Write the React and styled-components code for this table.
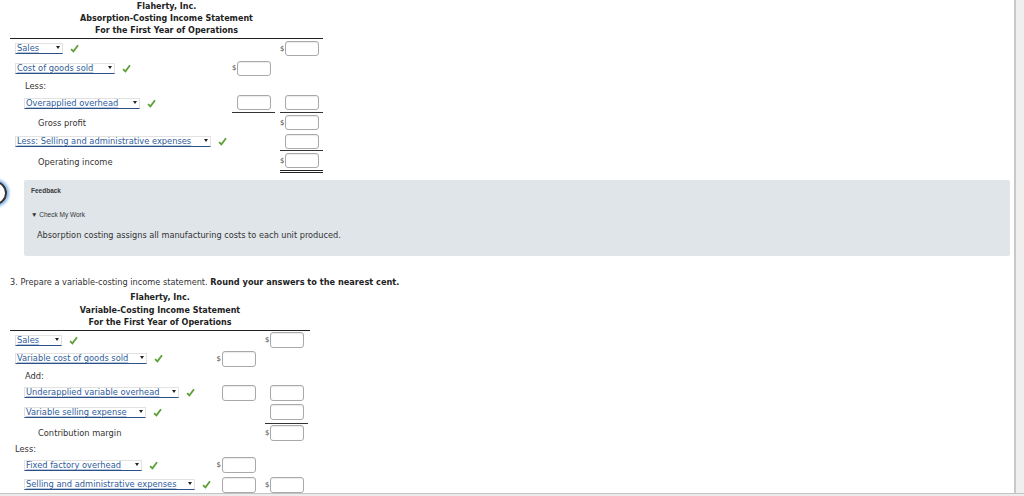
import React from "react";
import styled, { createGlobalStyle } from "styled-components";

const Global = createGlobalStyle`
  html, body { margin: 0; padding: 0; background: #fff; }
  body { font-family: "DejaVu Sans", Verdana, sans-serif; color: #222; }
`;

const Frame = styled.div`
  width: 1024px;
  height: 496px;
  display: grid;
  grid-template-columns: 1014px 10px;
  grid-template-rows: 493px 3px;
  overflow: hidden;
`;

const Main = styled.div`
  position: relative;
  overflow: hidden;
  padding-left: 10px;
  background: #fff;
`;

const Track = styled.div`
  border-left: 2px solid #c9c9c9;
  background: #efefef;
`;

const BottomBar = styled.div`
  grid-column: 1 / 3;
  border-top: 1px solid #c4c4c4;
  background: #ececec;
`;

const Title = styled.div`
  width: ${(p) => p.$w}px;
  text-align: center;
  font-weight: bold;
  font-size: 8px;
  line-height: ${(p) => p.$lh}px;
  padding-top: ${(p) => p.$pt}px;
  color: #222;
`;

const Table = styled.div`
  width: ${(p) => p.$w}px;
  border-top: 1px solid #222;
  margin-top: ${(p) => p.$mt}px;
`;

const Row = styled.div`
  display: grid;
  grid-template-columns: ${(p) => p.$cols};
  column-gap: ${(p) => p.$gap}px;
  height: ${(p) => p.$h}px;
  align-items: stretch;
`;

const LabelCell = styled.div`
  display: flex;
  align-items: center;
  padding-left: ${(p) => p.$indent}px;
  font-size: 8.3px;
  color: #333;
`;

const Cell = styled.div`
  display: flex;
  align-items: center;
  justify-content: flex-end;
  padding-right: 4px;
  border-bottom: ${(p) =>
    p.$under === "double" ? "3px double #222" : p.$under ? "1px solid #333" : "none"};
  box-sizing: border-box;
`;

const Dollar = styled.span`
  font-size: 7px;
  color: #444;
  margin-right: 1px;
`;

const Input = styled.div`
  width: 32px;
  height: ${(p) => p.$h}px;
  border: 1px solid #a9a9a9;
  border-radius: 3px;
  background: #fff;
  box-shadow: inset 0 1px 1px rgba(0, 0, 0, 0.08);
`;

const SelectBox = styled.div`
  width: ${(p) => p.$w}px;
  height: 11px;
  box-sizing: border-box;
  display: flex;
  align-items: flex-end;
  justify-content: space-between;
  border: 1px solid #e2e2e2;
  border-bottom: 1.5px solid #2c4f86;
  color: #2f5d9b;
  font-size: 8.3px;
  line-height: 9px;
  padding-left: 1px;
  white-space: nowrap;
  text-decoration: underline;
  text-decoration-color: rgba(47, 93, 155, 0.35);
`;

const Arrow = styled.span`
  width: 0;
  height: 0;
  border-left: 2.5px solid transparent;
  border-right: 2.5px solid transparent;
  border-top: 3px solid #222;
  margin: 0 2px 4px 0;
`;

const CheckIcon = styled.svg`
  margin-left: 7px;
  flex: none;
`;

const Feedback = styled.div`
  margin-top: ${(p) => p.$mt}px;
  margin-left: 14px;
  width: 986px;
  height: 76px;
  box-sizing: border-box;
  background: #dfe5e9;
  border-radius: 2px;
  padding: 7px 0 0 7px;
`;

const FbHead = styled.div`
  font-size: 6.5px;
  font-weight: bold;
  color: #3a3a3a;
  line-height: 8px;
  font-family: "Liberation Sans", Arial, sans-serif;
`;

const FbToggle = styled.div`
  margin-top: 16px;
  font-size: 6.5px;
  color: #333;
  line-height: 8px;
  font-family: "Liberation Sans", Arial, sans-serif;
`;

const FbText = styled.div`
  margin-top: 11px;
  margin-left: 6px;
  font-size: 8.2px;
  color: #333;
  line-height: 10px;
`;

const Question = styled.div`
  margin-top: 21px;
  font-size: 8.2px;
  color: #333;
  line-height: 10px;
  b { color: #222; }
`;

const Circle = styled.div`
  position: absolute;
  left: -17px;
  top: 181px;
  width: 20px;
  height: 20px;
  border: 2px solid #333;
  border-radius: 50%;
  box-shadow: 0 0 3px 2px #7db4ee;
`;

const Check = () => (
  <CheckIcon width="9" height="9" viewBox="0 0 10 10">
    <path d="M1.2 5.6 L3.8 8.2 L8.9 1.3" fill="none" stroke="#5a9e35" strokeWidth="1.9" />
  </CheckIcon>
);

const Select = ({ w, children }) => (
  <>
    <SelectBox $w={w}>
      <span>{children}</span>
      <Arrow />
    </SelectBox>
    <Check />
  </>
);

const Amt = ({ dollar, under, h }) => (
  <Cell $under={under}>
    {dollar && <Dollar>$</Dollar>}
    <Input $h={h} />
  </Cell>
);

const Empty = ({ under }) => <Cell $under={under} />;

const statement1 = [
  { h: 19, indent: 5, sel: "Sales", w: 48, c2: { dollar: true } },
  { h: 20, indent: 5, sel: "Cost of goods sold", w: 100, c1: { dollar: true } },
  { h: 15, indent: 15, text: "Less:" },
  { h: 20, indent: 14, sel: "Overapplied overhead", w: 116, c1: { under: true }, c2: { under: true } },
  { h: 19, indent: 28, text: "Gross profit", c2: { dollar: true } },
  { h: 19, indent: 5, sel: "Less: Selling and administrative expenses", w: 197, c2: { under: true } },
  { h: 22, indent: 28, text: "Operating income", c2: { dollar: true, under: "double" } },
];

const statement2 = [
  { h: 19, indent: 5, sel: "Sales", w: 47, c2: { dollar: true } },
  { h: 18, indent: 5, sel: "Variable cost of goods sold", w: 132, c1: { dollar: true } },
  { h: 16, indent: 15, text: "Add:" },
  { h: 18, indent: 14, sel: "Underapplied variable overhead", w: 155, c1: {}, c2: {} },
  { h: 22, indent: 14, sel: "Variable selling expense", w: 122, c2: { under: true } },
  { h: 18, indent: 28, text: "Contribution margin", c2: { dollar: true } },
  { h: 14, indent: 5, text: "Less:" },
  { h: 19, indent: 14, sel: "Fixed factory overhead", w: 118, c1: { dollar: true } },
  { h: 20, indent: 14, sel: "Selling and administrative expenses", w: 172, c1: {}, c2: { dollar: true } },
];

const Statement = ({ rows, cols, gap, width, inputH, mt }) => (
  <Table $w={width} $mt={mt}>
    {rows.map((r, i) => (
      <Row key={i} $cols={cols} $gap={gap} $h={r.h}>
        <LabelCell $indent={r.indent}>
          {r.sel ? <Select w={r.w}>{r.sel}</Select> : r.text}
        </LabelCell>
        {r.c1 ? <Amt {...r.c1} h={inputH} /> : <Empty />}
        {r.c2 ? <Amt {...r.c2} h={inputH} /> : <Empty />}
      </Row>
    ))}
  </Table>
);

export default function App() {
  return (
    <>
      <Global />
      <Frame>
        <Main>
          <Circle />
          <Title $w={313} $lh={12} $pt={1}>
            <div>Flaherty, Inc.</div>
            <div>Absorption-Costing Income Statement</div>
            <div>For the First Year of Operations</div>
          </Title>
          <Statement rows={statement1} cols="217px 43px 43px" gap={5} width={313} inputH={13} mt={1} />
          <Feedback $mt={7}>
            <FbHead>Feedback</FbHead>
            <FbToggle>▼ Check My Work</FbToggle>
            <FbText>Absorption costing assigns all manufacturing costs to each unit produced.</FbText>
          </Feedback>
          <Question>
            3. Prepare a variable-costing income statement. <b>Round your answers to the nearest cent.</b>
          </Question>
          <Title $w={300} $lh={12.5} $pt={5}>
            <div>Flaherty, Inc.</div>
            <div>Variable-Costing Income Statement</div>
            <div>For the First Year of Operations</div>
          </Title>
          <Statement rows={statement2} cols="201px 44px 43px" gap={5} width={300} inputH={14} mt={0} />
        </Main>
        <Track />
        <BottomBar />
      </Frame>
    </>
  );
}
